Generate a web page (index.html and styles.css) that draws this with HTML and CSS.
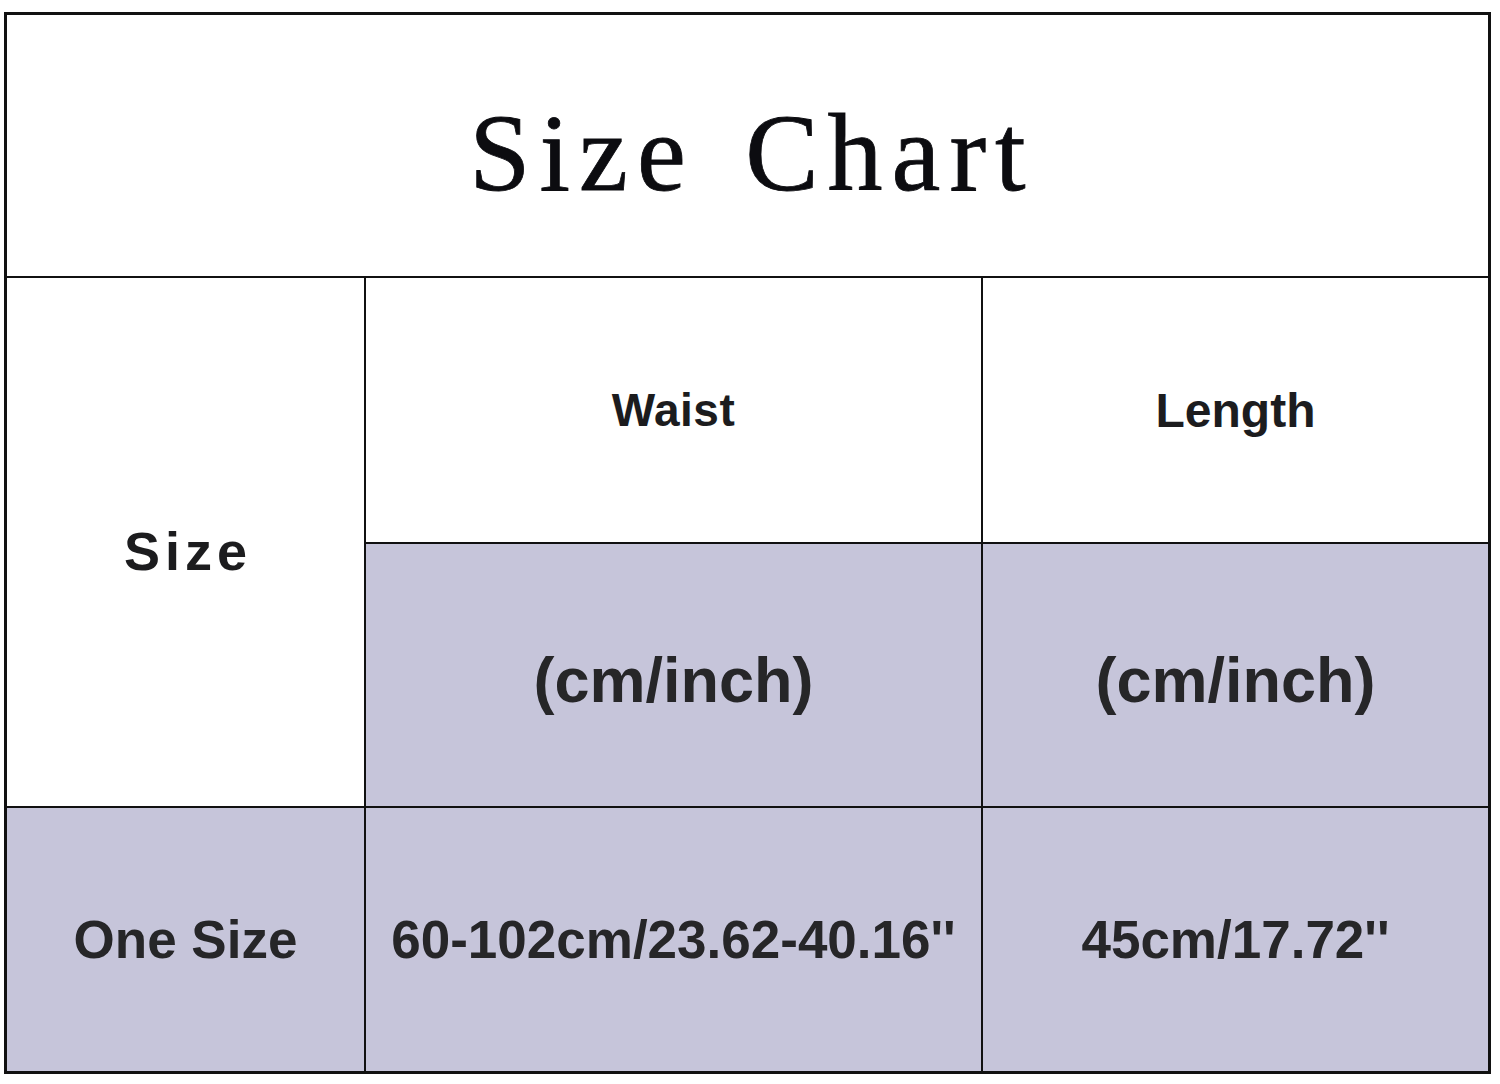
FILE: index.html
```html
<!DOCTYPE html>
<html>
<head>
<meta charset="utf-8">
<link rel="stylesheet" href="styles.css">
</head>
<body>
<div class="chart">
  <div class="cell title">Size Chart</div>
  <div class="cell size-head">Size</div>
  <div class="cell head">Waist</div>
  <div class="cell head head-wide">Length</div>
  <div class="cell unit">(cm/inch)</div>
  <div class="cell unit">(cm/inch)</div>
  <div class="cell data">One Size</div>
  <div class="cell data">60-102cm/23.62-40.16''</div>
  <div class="cell data">45cm/17.72''</div>
</div>
</body>
</html>
```
FILE: styles.css
```css
html, body {
  margin: 0;
  padding: 0;
  background: #ffffff;
}
body {
  padding: 12px 0 0 4px;
}
.chart {
  width: 1487px;
  height: 1062px;
  box-sizing: border-box;
  display: grid;
  grid-template-columns: 357px 615px 505px;
  grid-template-rows: 261px 264px 262px 263px;
  gap: 2px;
  padding: 3px;
  background: #111111;
}
.cell {
  display: flex;
  align-items: center;
  justify-content: center;
  background: #ffffff;
  color: #1c1c1e;
  font-family: "Liberation Sans", Arial, sans-serif;
  font-weight: bold;
  white-space: nowrap;
}
.title {
  grid-column: 1 / 4;
  font-family: "Liberation Serif", "Times New Roman", serif;
  font-weight: normal;
  font-size: 110px;
  letter-spacing: 9px;
  word-spacing: 14px;
  padding: 16px 0 0 9px;
  color: #0c0c10;
  -webkit-text-stroke: 0.8px #0c0c10;
}
.size-head {
  grid-row: 2 / 4;
  font-size: 54px;
  letter-spacing: 5px;
  padding-top: 18px;
  padding-left: 5px;
  box-sizing: border-box;
}
.head {
  font-size: 46px;
  letter-spacing: 0.5px;
}
.head-wide {
  font-size: 48px;
  letter-spacing: 0;
}
.unit {
  background: #c6c5da;
  font-size: 63px;
  padding-top: 10px;
  box-sizing: border-box;
  color: #262628;
}
.data {
  background: #c6c5da;
  font-size: 53px;
  color: #262628;
}
```
